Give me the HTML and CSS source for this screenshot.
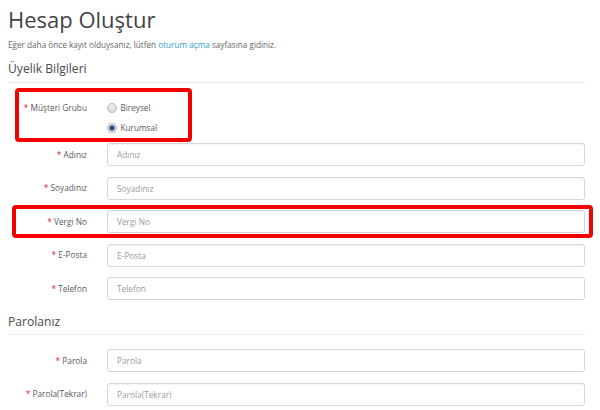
FILE: index.html
```html
<!DOCTYPE html>
<html lang="tr">
<head>
<meta charset="utf-8">
<title>Hesap Oluştur</title>
<link rel="stylesheet" href="styles.css">
</head>
<body>
<div class="page">
  <h1 class="title">Hesap Oluştur</h1>
  <p class="intro">Eğer daha önce kayıt olduysanız, lütfen <a class="link" href="#">oturum açma</a> sayfasına gidiniz.</p>

  <h2 class="legend">Üyelik Bilgileri</h2>

  <div class="row row-radio">
    <div class="label"><span class="req">*</span> Müşteri Grubu</div>
    <div class="radios">
      <div class="radio"><span class="dot"></span>Bireysel</div>
      <div class="radio"><span class="dot checked"></span>Kurumsal</div>
    </div>
    <div class="mark mark-group"></div>
  </div>

  <div class="row">
    <div class="label"><span class="req">*</span> Adınız</div>
    <div class="input"><span class="ph">Adınız</span></div>
  </div>
  <div class="row">
    <div class="label"><span class="req">*</span> Soyadınız</div>
    <div class="input"><span class="ph">Soyadınız</span></div>
  </div>
  <div class="row">
    <div class="label"><span class="req">*</span> Vergi No</div>
    <div class="input"><span class="ph">Vergi No</span></div>
    <div class="mark mark-tax"></div>
  </div>
  <div class="row">
    <div class="label"><span class="req">*</span> E-Posta</div>
    <div class="input"><span class="ph">E-Posta</span></div>
  </div>
  <div class="row">
    <div class="label"><span class="req">*</span> Telefon</div>
    <div class="input"><span class="ph">Telefon</span></div>
  </div>

  <h2 class="legend legend-2">Parolanız</h2>

  <div class="row">
    <div class="label"><span class="req">*</span> Parola</div>
    <div class="input"><span class="ph">Parola</span></div>
  </div>
  <div class="row">
    <div class="label"><span class="req">*</span> Parola(Tekrar)</div>
    <div class="input"><span class="ph">Parola(Tekrar)</span></div>
  </div>
</div>
</body>
</html>
```

FILE: styles.css
```css
html, body {
  margin: 0;
  padding: 0;
  background: #ffffff;
}

body {
  font-family: "Open Sans", "DejaVu Sans", sans-serif;
  color: #555555;
  overflow: hidden;
}

.page {
  width: 577px;
  padding: 5px 15px 0 8px;
}

.title {
  margin: 0;
  font-size: 22px;
  line-height: 28px;
  font-weight: 400;
  color: #444444;
}

.intro {
  margin: 5.5px 0 0;
  font-size: 8.2px;
  line-height: 12px;
  color: #666666;
}

.link {
  color: #2c9fd3;
  text-decoration: none;
}

.legend {
  margin: 10.5px 0 0;
  padding-bottom: 5px;
  font-size: 12.1px;
  line-height: 16px;
  font-weight: 400;
  color: #4a4a4a;
  border-bottom: 1px solid #ececec;
}

.legend-2 {
  margin-top: 14px;
  padding-bottom: 4px;
}

.row {
  position: relative;
  display: flex;
  align-items: center;
  height: 23px;
  margin-bottom: 10.5px;
}

.row-radio {
  align-items: flex-start;
  height: 32px;
  margin-top: 19px;
  margin-bottom: 9px;
}

.legend + .row:not(.row-radio) {
  margin-top: 14px;
}

.label {
  width: 79px;
  flex: none;
  text-align: right;
  font-size: 8.3px;
  line-height: 12px;
  color: #5a5a5a;
  padding-right: 20px;
  white-space: nowrap;
}

.req {
  color: #e4202a;
}

.input {
  flex: 1;
  height: 21px;
  border: 1px solid #d6d6d6;
  border-radius: 3px;
  background: #ffffff;
  box-shadow: inset 0 1px 1px rgba(0, 0, 0, 0.04);
  display: flex;
  align-items: center;
  padding-left: 9px;
}

.ph {
  font-size: 8.3px;
  color: #9a9a9a;
}

.radios {
  display: flex;
  flex-direction: column;
  gap: 8px;
}

.radio {
  display: flex;
  align-items: center;
  gap: 3.5px;
  font-size: 8.2px;
  line-height: 12px;
  color: #5a5a5a;
}

.dot {
  width: 8px;
  height: 8px;
  border-radius: 50%;
  border: 1px solid #b8b8b8;
  background: linear-gradient(#f0f0f0, #d6d6d6);
  box-sizing: content-box;
}

.dot.checked {
  background: radial-gradient(circle, #24466b 0, #2f5a86 2.2px, #c2ccd6 3px, #e3e3e3 4.5px);
}

.mark {
  position: absolute;
  border: 4px solid #f20000;
  border-radius: 4px;
  box-sizing: border-box;
  pointer-events: none;
}

.mark-group {
  left: 7px;
  top: -14px;
  width: 177px;
  height: 54px;
}

.mark-tax {
  left: 4px;
  right: -8px;
  top: -5px;
  bottom: -5px;
}
```
